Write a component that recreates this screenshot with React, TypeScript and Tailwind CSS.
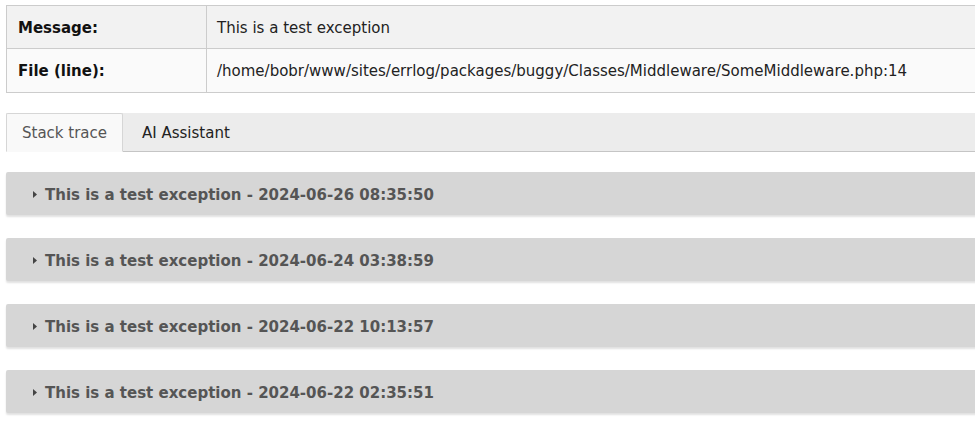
import React from "react";

const entries = [
  "2024-06-26 08:35:50",
  "2024-06-24 03:38:59",
  "2024-06-22 10:13:57",
  "2024-06-22 02:35:51",
];

export default function App() {
  return (
    <div className="w-[975px] h-[421px] overflow-hidden bg-white text-[#222] font-['DejaVu_Sans',Verdana,sans-serif]">
      <div className="w-[1000px] pl-[6px] pt-[5px]">
        {/* Exception details */}
        <table className="w-full border-collapse text-[15px]">
          <tbody>
            <tr className="bg-[#f2f2f2] h-[43px]">
              <th className="w-[200px] border border-[#ccc] px-[11px] pt-[2px] text-left font-bold text-[#111]">Message:</th>
              <td className="border border-[#ccc] px-[10px] pt-[2px]">This is a test exception</td>
            </tr>
            <tr className="bg-[#fafafa] h-[44px]">
              <th className="w-[200px] border border-[#ccc] px-[11px] pt-[2px] text-left font-bold text-[#111]">File (line):</th>
              <td className="border border-[#ccc] px-[10px] pt-[2px]">/home/bobr/www/sites/errlog/packages/buggy/Classes/Middleware/SomeMiddleware.php:14</td>
            </tr>
          </tbody>
        </table>

        {/* Tabs */}
        <div className="mt-[20px] flex h-[39px] bg-[#ececec] border-b border-[#c5c5c5] text-[15px]">
          <button className="-mb-px w-[117px] pt-[2px] bg-[#f9f9f9] border border-[#d6d6d6] border-b-[#f9f9f9] rounded-t-[2px] text-[#555]">Stack trace</button>
          <button className="px-[19px] pt-[2px] text-[#222]">AI Assistant</button>
        </div>

        {/* Trace list */}
        <div className="mt-[20px] flex flex-col gap-[23px]">
          {entries.map((d) => (
            <div key={d} className="h-[43px] bg-[#d6d6d6] rounded-[2px] shadow-[0_2px_2px_rgba(0,0,0,0.12)] flex items-center pl-[27px] pt-[3px] text-[15px] font-bold text-[#555]">
              <svg width="4" height="7" viewBox="0 0 4 7" className="mr-[8px] -mt-[1px]">
                <path d="M0 0 L4 3.5 L0 7 Z" fill="#444" />
              </svg>
              This is a test exception - {d}
            </div>
          ))}
        </div>
      </div>
    </div>
  );
}
